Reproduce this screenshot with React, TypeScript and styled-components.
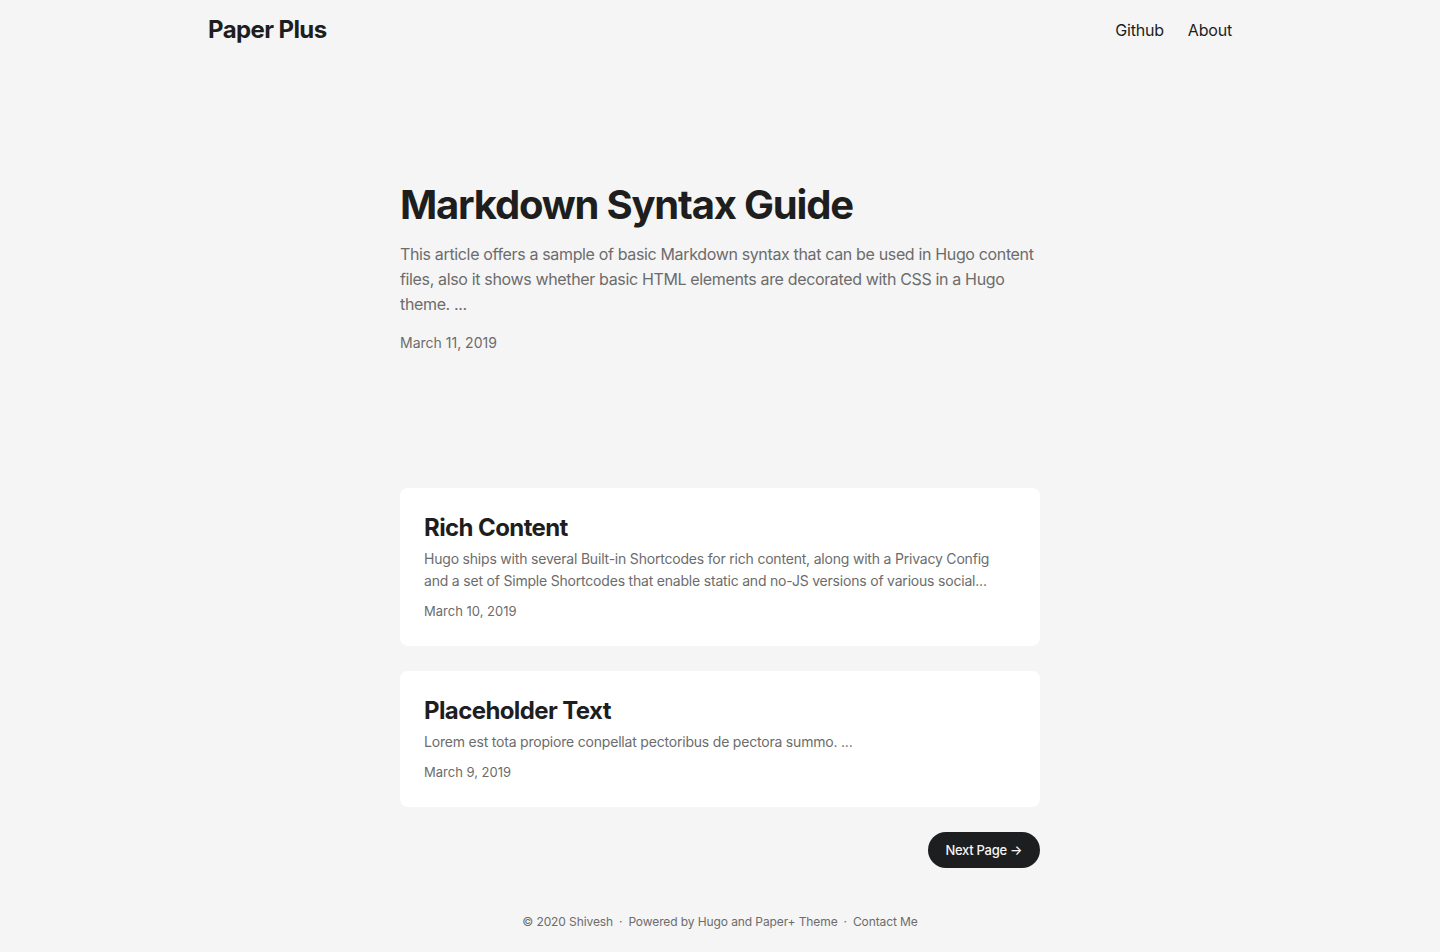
import React from "react";
import styled, { createGlobalStyle } from "styled-components";

const Global = createGlobalStyle`
  * { box-sizing: border-box; }
  html, body { margin: 0; padding: 0; }
  body {
    background: #f5f5f5;
    color: #1e1e1e;
    font-family: Inter, "Noto Sans", sans-serif;
    -webkit-font-smoothing: antialiased;
  }
  a { text-decoration: none; color: inherit; }
`;

const Header = styled.header`
  height: 60px;
`;

const Nav = styled.nav`
  max-width: 1072px;
  margin: 0 auto;
  padding: 0 24px;
  height: 60px;
  display: flex;
  align-items: center;
  justify-content: space-between;
`;

const Logo = styled.a`
  font-size: 24px;
  font-weight: 700;
  line-height: 60px;
  letter-spacing: -0.6px;
  color: #1e1e1e;
`;

const Menu = styled.ul`
  list-style: none;
  margin: 0;
  padding: 0;
  display: flex;
  gap: 24px;
`;

const MenuLink = styled.a`
  font-size: 16px;
  line-height: 60px;
  letter-spacing: -0.2px;
  color: #1e1e1e;
`;

const Main = styled.main`
  max-width: 688px;
  margin: 0 auto;
  padding: 24px;
`;

const FirstEntry = styled.article`
  min-height: 316px;
  margin: 24px 0 64px;
  display: flex;
  flex-direction: column;
  justify-content: center;
`;

const BigTitle = styled.h1`
  margin: 0;
  font-size: 40px;
  line-height: 52px;
  font-weight: 700;
  letter-spacing: -1.2px;
  color: #1e1e1e;
`;

const BigSummary = styled.p`
  margin: 11px 0 15px;
  font-size: 16px;
  line-height: 25px;
  letter-spacing: -0.35px;
  color: #6c6c6c;
`;

const Meta = styled.div<{ $size: number }>`
  font-size: ${(p) => p.$size}px;
  line-height: ${(p) => (p.$size === 14 ? 21 : 20)}px;
  color: #6c6c6c;
`;

const Card = styled.article`
  background: #fff;
  border-radius: 8px;
  padding: 24px 24px 25px;
  margin-bottom: 25px;
`;

const CardTitle = styled.h2`
  margin: 0;
  font-size: 24px;
  line-height: 31px;
  font-weight: 700;
  letter-spacing: -0.6px;
  color: #1e1e1e;
`;

const CardSummary = styled.p`
  margin: 5px 0 9px;
  font-size: 14px;
  line-height: 22px;
  letter-spacing: -0.2px;
  color: #6c6c6c;
`;

const Pagination = styled.nav`
  display: flex;
  justify-content: flex-end;
`;

const NextButton = styled.a`
  display: inline-block;
  background: #1d1e20;
  color: #f5f5f5;
  font-size: 13px;
  font-weight: 500;
  line-height: 36px;
  letter-spacing: -0.3px;
  padding: 0 18px;
  border-radius: 18px;
`;

const Footer = styled.footer`
  max-width: 688px;
  margin: 0 auto;
  padding: 18px 24px;
  text-align: center;
  font-size: 12px;
  line-height: 24px;
  letter-spacing: -0.1px;
  color: #6c6c6c;
`;

const Sep = styled.span`
  margin: 0 6px;
`;

const posts = [
  {
    title: "Rich Content",
    summary:
      "Hugo ships with several Built-in Shortcodes for rich content, along with a Privacy Config and a set of Simple Shortcodes that enable static and no-JS versions of various social...",
    date: "March 10, 2019",
  },
  {
    title: "Placeholder Text",
    summary: "Lorem est tota propiore conpellat pectoribus de pectora summo. ...",
    date: "March 9, 2019",
  },
];

export default function App() {
  return (
    <>
      <Global />
      <Header>
        <Nav>
          <Logo href="#">Paper Plus</Logo>
          <Menu>
            <li>
              <MenuLink href="#">Github</MenuLink>
            </li>
            <li>
              <MenuLink href="#">About</MenuLink>
            </li>
          </Menu>
        </Nav>
      </Header>
      <Main>
        <FirstEntry>
          <BigTitle>Markdown Syntax Guide</BigTitle>
          <BigSummary>
            This article offers a sample of basic Markdown syntax that can be used in Hugo content files, also
            it shows whether basic HTML elements are decorated with CSS in a Hugo theme. ...
          </BigSummary>
          <Meta $size={14}>March 11, 2019</Meta>
        </FirstEntry>
        {posts.map((p) => (
          <Card key={p.title}>
            <CardTitle>{p.title}</CardTitle>
            <CardSummary>{p.summary}</CardSummary>
            <Meta $size={13}>{p.date}</Meta>
          </Card>
        ))}
        <Pagination>
          <NextButton href="#">Next Page →</NextButton>
        </Pagination>
      </Main>
      <Footer>
        <span>© 2020 Shivesh</span>
        <Sep>·</Sep>
        <span>Powered by Hugo and Paper+ Theme</span>
        <Sep>·</Sep>
        <span>Contact Me</span>
      </Footer>
    </>
  );
}
